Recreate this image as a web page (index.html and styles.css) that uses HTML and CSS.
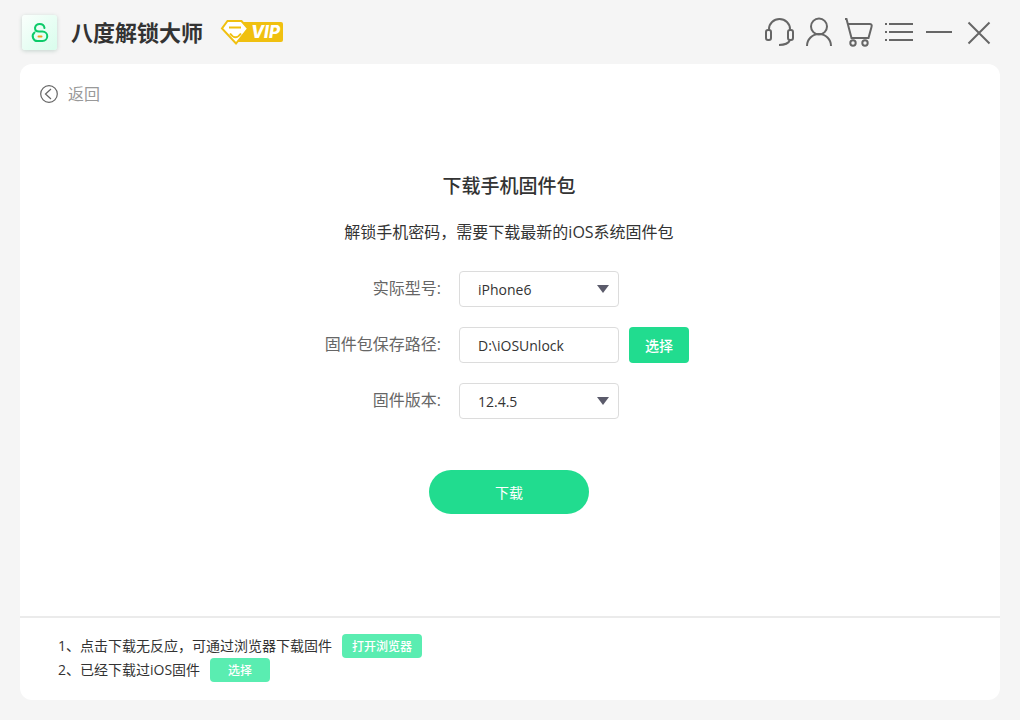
FILE: index.html
```html
<!DOCTYPE html>
<html lang="zh-CN">
<head>
<meta charset="utf-8">
<meta name="viewport" content="width=device-width, initial-scale=1">
<title>八度解锁大师</title>
<link rel="stylesheet" href="styles.css">
</head>
<body>
<header class="titlebar">
  <div class="logo">
    <svg width="20" height="22" viewBox="0 0 20 22" fill="none" stroke="#0ccb69" stroke-width="2" stroke-linecap="round">
      <path d="M14.500 7A4.800 4.800 0 0 0 5 7C5 9.500 7 10.500 9 10.500H12.500A4.700 4.700 0 0 1 12.500 20H8A4.800 4.800 0 0 1 4.500 11.500"/>
      <path d="M8.500 15.500h3" stroke="#f0a020"/>
    </svg>
  </div>
  <h1 class="brand">八度解锁大师</h1>
  <div class="vip">
    <svg class="vip-gem" width="30" height="26" viewBox="0 0 30 26">
      <path d="M7.500 2H21.500L28 9.500L16 24.500L2 9.500Z" fill="#fff" stroke="#f0c010" stroke-width="2"/>
      <path d="M9 8.500H21M10 14.500Q15.500 22 21 14.500" fill="none" stroke="#f0c010" stroke-width="2"/>
    </svg>
    <span class="vip-text">VIP</span>
  </div>
  <nav class="tools">
    <button class="tool" aria-label="客服">
      <svg width="30" height="30" viewBox="0 0 30 30"><path d="M5 13v-1a10.500 10 0 0 1 21 0v1M26 23c-1.500 3.500-5.500 5-11 5"/><rect x="2" y="13" width="5" height="10" rx="2"/><rect x="24" y="13" width="5" height="10" rx="2"/></svg>
    </button>
    <button class="tool" aria-label="账户">
      <svg width="30" height="30" viewBox="0 0 30 30"><circle cx="15" cy="9.500" r="8"/><path d="M3 29a12 12 0 0 1 24 0"/></svg>
    </button>
    <button class="tool" aria-label="购物车">
      <svg width="30" height="30" viewBox="0 0 30 30"><path d="M1 2h1.500L7.500 21H24.500L27.500 10Q28.500 7 25.500 7H4"/><circle cx="9" cy="26" r="2.700"/><circle cx="21" cy="26" r="2.700"/></svg>
    </button>
    <button class="tool" aria-label="菜单">
      <svg width="30" height="30" viewBox="0 0 30 30"><path d="M1 7h2M5 7h24M1 15h2M5 15h24M1 23h2M5 23h24"/></svg>
    </button>
    <button class="tool" aria-label="最小化">
      <svg width="30" height="30" viewBox="0 0 30 30"><path d="M2 15h26"/></svg>
    </button>
    <button class="tool" aria-label="关闭">
      <svg width="30" height="30" viewBox="0 0 30 30"><path d="M4.500 5.500l21 21M25.500 5.500L4.500 26.500"/></svg>
    </button>
  </nav>
</header>
<main class="panel">
  <a class="back" href="#">
    <svg width="18" height="18" viewBox="0 0 18 18" fill="none" stroke="#666" stroke-width="1.200"><circle cx="9" cy="9" r="8.300"/><path d="M11 4L5.500 9l5.500 5"/></svg>
    返回
  </a>
  <section class="content">
    <h2 class="heading">下载手机固件包</h2>
    <p class="intro">解锁手机密码，需要下载最新的iOS系统固件包</p>
    <form class="form">
      <label class="label" for="model">实际型号:</label>
      <div class="picker">
        <select class="field" id="model"><option>iPhone6</option></select>
        <svg class="arrow" width="12" height="8" viewBox="0 0 12 8"><path d="M0 0H12L6 8Z"/></svg>
      </div>
      <label class="label" for="path">固件包保存路径:</label>
      <input class="field" id="path" type="text" value="D:\iOSUnlock">
      <button class="choose" type="button">选择</button>
      <label class="label" for="version">固件版本:</label>
      <div class="picker">
        <select class="field" id="version"><option>12.4.5</option></select>
        <svg class="arrow" width="12" height="8" viewBox="0 0 12 8"><path d="M0 0H12L6 8Z"/></svg>
      </div>
    </form>
    <button class="download" type="button">下载</button>
  </section>
  <footer class="notes">
    <div class="note">1、点击下载无反应，可通过浏览器下载固件 <button class="mini mini-wide" type="button">打开浏览器</button></div>
    <div class="note">2、已经下载过iOS固件 <button class="mini" type="button">选择</button></div>
  </footer>
</main>
</body>
</html>
```
FILE: styles.css
```css
* {
  box-sizing: border-box;
}

body {
  margin: 0;
  min-height: 100vh;
  display: flex;
  flex-direction: column;
  background: #f5f5f5;
  color: #333;
  font-family: "Open Sans", "Noto Sans CJK SC", sans-serif;
  font-size: 16px;
}

button {
  border: 0;
  padding: 0;
  font-family: inherit;
  color: #fff;
  cursor: pointer;
}

svg {
  display: block;
}

.titlebar {
  height: 64px;
  padding: 0 26px 0 22px;
  display: flex;
  align-items: center;
}

.logo {
  width: 35px;
  height: 35px;
  display: flex;
  align-items: center;
  justify-content: center;
  border-radius: 3px;
  background: linear-gradient(135deg, #fafffc, #d8fdec);
  box-shadow: 0 1px 4px rgba(0, 80, 50, 0.2);
}

.brand {
  margin: 0 0 0 14px;
  font-size: 22px;
  line-height: 32px;
  font-weight: 700;
}

.vip {
  margin-left: 17px;
  display: flex;
  align-items: center;
}

.vip-gem {
  position: relative;
}

.vip-text {
  width: 48px;
  height: 20px;
  margin-left: -15px;
  padding-right: 3px;
  border-radius: 2px;
  background: #f0c010;
  color: #fff;
  font: italic 800 17px/20px Inter, sans-serif;
  text-align: right;
}

.tools {
  margin-left: auto;
  display: flex;
  gap: 10px;
}

.tool {
  width: 30px;
  height: 30px;
  background: none;
}

.tool svg {
  fill: none;
  stroke: #666;
  stroke-width: 2;
}

.panel {
  flex: 1;
  margin: 0 20px 20px;
  display: flex;
  flex-direction: column;
  background: #fff;
  border-radius: 12px;
}

.back {
  align-self: flex-start;
  margin: 18px 20px 0;
  display: flex;
  align-items: center;
  gap: 10px;
  line-height: 24px;
  color: #999;
  text-decoration: none;
}

.content {
  flex: 1;
  padding: 66px 2px 20px 0;
  display: flex;
  flex-direction: column;
  align-items: center;
}

.heading {
  margin: 0;
  font-size: 19px;
  line-height: 28px;
  font-weight: 500;
}

.intro {
  margin: 20px 0 0;
  line-height: 24px;
}

.form {
  margin-top: 27px;
  padding-right: 10px;
  display: grid;
  grid-template-columns: 130px 160px 60px;
  grid-auto-rows: 36px;
  gap: 20px 10px;
}

.label {
  grid-column: 1;
  padding-right: 8px;
  line-height: 34px;
  color: #666;
  text-align: right;
}

.picker {
  position: relative;
}

.field {
  width: 100%;
  height: 36px;
  padding: 0 18px;
  appearance: none;
  border: 1px solid #dcdcdc;
  border-radius: 4px;
  background: #fff;
  color: #333;
  font-family: inherit;
  font-size: 14px;
}

.arrow {
  position: absolute;
  top: 14px;
  right: 10px;
  fill: #5b5b6b;
  pointer-events: none;
}

.choose {
  border-radius: 4px;
  background: #21dc8f;
  font-size: 14px;
  font-weight: 500;
}

.download {
  width: 160px;
  height: 44px;
  margin-top: 51px;
  border-radius: 22px;
  background: #21dc8f;
  font-size: 14px;
}

.notes {
  min-height: 84px;
  padding: 16px 38px 18px;
  border-top: 2px solid #ebebeb;
  font-size: 14px;
}

.note {
  display: flex;
  align-items: center;
  gap: 10px;
  line-height: 24px;
}

.mini {
  width: 60px;
  height: 24px;
  border-radius: 4px;
  background: #5aedb1;
  font-size: 12px;
  font-weight: 500;
}

.mini-wide {
  width: 80px;
}
```
